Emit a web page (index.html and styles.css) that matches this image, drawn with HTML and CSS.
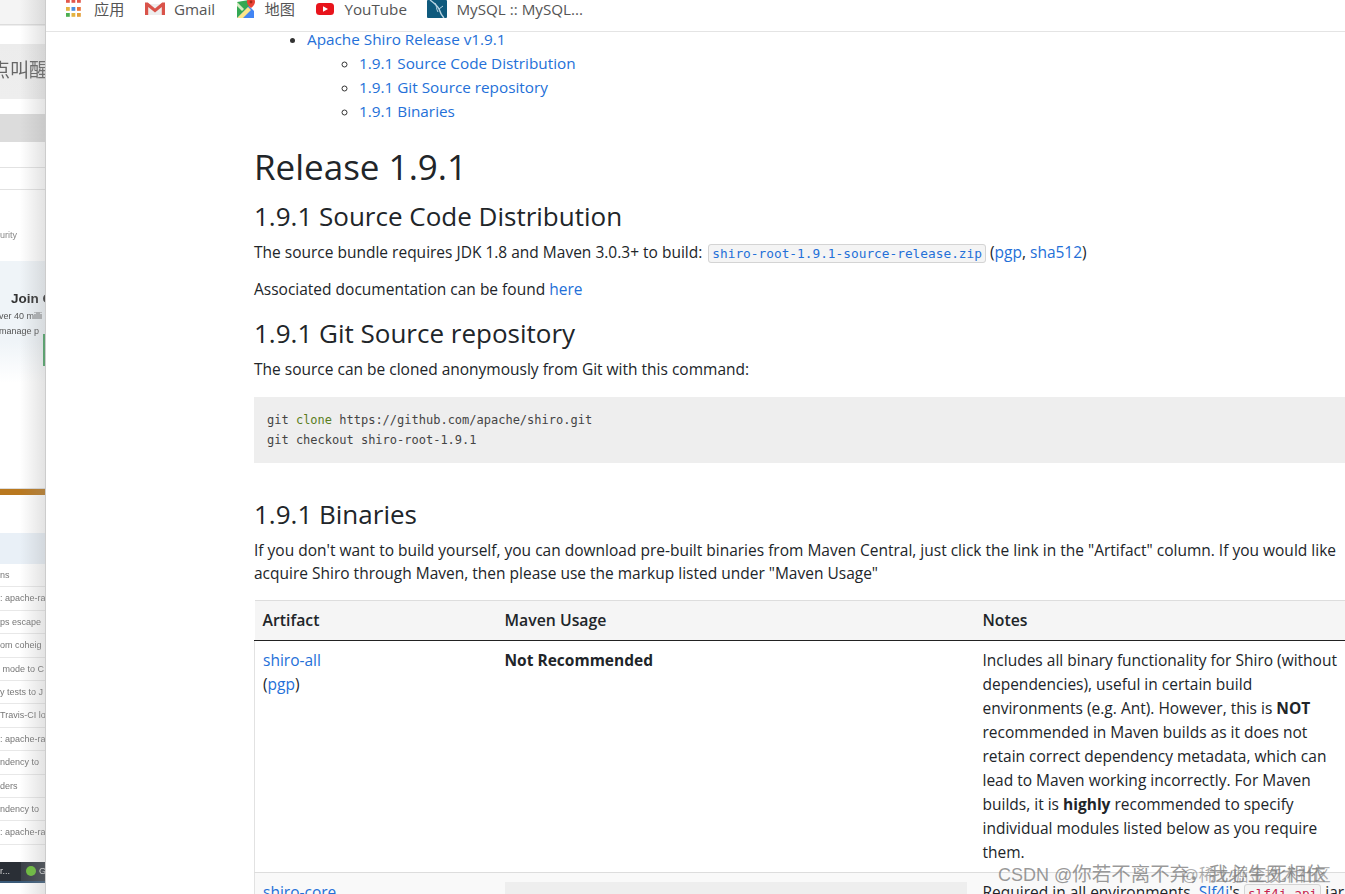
FILE: index.html
```html
<!DOCTYPE html>
<html lang="zh">
<head>
<meta charset="utf-8">
<title>Apache Shiro Release</title>
<link rel="stylesheet" href="styles.css">
</head>
<body>
<div class="desktop">
  <aside class="back-window">
    <div class="bw-top"><span class="bw-title">点叫醒</span></div>
    <div class="bw-gap1"></div>
    <div class="bw-band"></div>
    <div class="bw-tabs"><span class="bw-rule"></span><span class="bw-rule bw-rule2"></span><span class="bw-sec">urity</span></div>
    <div class="bw-join">
      <b>Join G</b>
      <span>ver 40 milli</span>
      <span>manage p</span>
      <i class="bw-btn"></i>
    </div>
    <div class="bw-orange"></div>
    <div class="bw-head"></div>
    <ul class="bw-list">
      <li>ns</li><li>: apache-ra</li><li>ps escape</li><li>om coheig</li><li>&nbsp;mode to C</li><li>y tests to J</li><li>Travis-CI lo</li><li>: apache-ra</li><li>ndency to</li><li>ders</li><li>ndency to</li><li>: apache-ra</li>
    </ul>
    <div class="bw-task"><span class="bw-task-a">r...</span><span class="bw-task-b"><i></i>G</span></div>
  </aside>
  <main class="front-window">
    <nav class="bookmarks">
      <a class="bm">
        <svg class="ic" viewBox="0 0 20 18"><rect x="1" y="-1" width="3.800" height="3.800" fill="#e2574c"/><rect x="6.500" y="-1" width="3.800" height="3.800" fill="#e2574c"/><rect x="12" y="-1" width="3.800" height="3.800" fill="#e2574c"/><rect x="1" y="7" width="3.800" height="3.800" fill="#e3b341"/><rect x="6.500" y="7" width="3.800" height="3.800" fill="#4a8fe0"/><rect x="12" y="7" width="3.800" height="3.800" fill="#e8743b"/><rect x="1" y="13" width="3.800" height="3.800" fill="#4caf50"/><rect x="6.500" y="13" width="3.800" height="3.800" fill="#e3b341"/><rect x="12" y="13" width="3.800" height="3.800" fill="#e3a03b"/></svg>
        应用</a>
      <a class="bm">
        <svg class="ic" viewBox="0 0 20 18"><path d="M3 4h14v11H3z" fill="#eee"/><path d="M0 2.500h2.800L10 8.500l7.200-6H20V15h-3.200V7L10 12.500 3.200 7V15H0z" fill="#d9534a"/></svg>
        Gmail</a>
      <a class="bm">
        <svg class="ic" viewBox="0 0 20 18"><path d="M1 2L13 0v18H1z" fill="#34a853"/><path d="M1 18L13 6l5 5v7z" fill="#4285f4"/><path d="M1 18L12 7l3 3L7 18z" fill="#fbe68a"/><path d="M1 2l7 7-2 2-5-5z" fill="#d5ecc2"/><path d="M15 -2a4 4 0 0 1 4 4c0 3-4 6-4 6s-4-3-4-6a4 4 0 0 1 4-4z" fill="#ea4335"/><circle cx="15" cy="2" r="1.400" fill="#a52714"/></svg>
        地图</a>
      <a class="bm">
        <svg class="ic" viewBox="0 0 20 18"><rect x="1" y="3" width="18" height="12" rx="3.500" fill="#e8141c"/><path d="M8 6.300l5 2.700-5 2.700z" fill="#fff"/></svg>
        YouTube</a>
      <a class="bm">
        <svg class="ic" viewBox="0 0 20 18"><rect x="0" width="20" height="18" rx="1" fill="#0f5a7d"/><path d="M3 0c4 3 7 5 9 9 1 3 2 6 5 9" fill="none" stroke="#b9d5e3" stroke-width="1.400"/><path d="M8 3c2 3 1 6 3 9M12 9l4-3" fill="none" stroke="#b9d5e3" stroke-width="1"/></svg>
        MySQL :: MySQL...</a>
    </nav>
    <article class="doc">
      <ul class="toc">
        <li><a>Apache Shiro Release v1.9.1</a>
          <ul>
            <li><a>1.9.1 Source Code Distribution</a></li>
            <li><a>1.9.1 Git Source repository</a></li>
            <li><a>1.9.1 Binaries</a></li>
          </ul>
        </li>
      </ul>
      <h1>Release 1.9.1</h1>
      <h2 class="h-source">1.9.1 Source Code Distribution</h2>
      <p>The source bundle requires JDK 1.8 and Maven 3.0.3+ to build: <a><code class="chip">shiro-root-1.9.1-source-release.zip</code></a> (<a>pgp</a>, <a>sha512</a>)</p>
      <p>Associated documentation can be found <a>here</a></p>
      <h2 class="h-git">1.9.1 Git Source repository</h2>
      <p>The source can be cloned anonymously from Git with this command:</p>
      <pre class="block">git <span class="kw">clone</span> https://github.com/apache/shiro.git
git checkout shiro-root-1.9.1</pre>
      <h2 class="h-bin">1.9.1 Binaries</h2>
      <p class="wide">If you don't want to build yourself, you can download pre-built binaries from Maven Central, just click the link in the "Artifact" column. If you would like<br>acquire Shiro through Maven, then please use the markup listed under "Maven Usage"</p>
      <table class="artifacts">
        <thead>
          <tr><th class="c1">Artifact</th><th class="c2">Maven Usage</th><th class="c3">Notes</th></tr>
        </thead>
        <tbody>
          <tr>
            <td><a>shiro-all</a><br>(<a>pgp</a>)</td>
            <td><b>Not Recommended</b></td>
            <td>Includes all binary functionality for Shiro (without<br>dependencies), useful in certain build<br>environments (e.g. Ant). However, this is <b>NOT</b><br>recommended in Maven builds as it does not<br>retain correct dependency metadata, which can<br>lead to Maven working incorrectly. For Maven<br>builds, it is <b>highly</b> recommended to specify<br>individual modules listed below as you require<br>them.</td>
          </tr>
          <tr class="alt">
            <td><a>shiro-core</a></td>
            <td><div class="mini"></div></td>
            <td>Required in all environments. <a>Slf4j</a>'s <code class="red">slf4j-api</code> jar</td>
          </tr>
        </tbody>
      </table>
    </article>
    <div class="mark"><span class="mark-ghost">@稀土掘金技术社区</span><span class="mark-latin">CSDN @</span><span class="mark-cjk">你若不离不弃，我必生死相依</span></div>
  </main>
</div>
</body>
</html>
```
FILE: styles.css
```css
* { box-sizing: border-box; }
html, body { margin: 0; height: 100%; overflow: hidden; background: #fff; }
.desktop { display: flex; width: 1345px; height: 894px; overflow: hidden; font-family: "Open Sans", "Noto Sans CJK SC", sans-serif; }

/* blurred window behind */
.back-window { flex: 0 0 46px; height: 894px; overflow: hidden; display: flex; flex-direction: column; background: #fff; color: #666; font-family: "Liberation Sans", "Noto Sans CJK SC", sans-serif; white-space: nowrap; position: relative; filter: blur(.45px); }
.back-window::after { content: ""; position: absolute; top: 0; right: 0; bottom: 0; width: 26px; background: linear-gradient(to right, rgba(150,150,150,0), rgba(150,150,150,.28)); }
.bw-top { height: 99px; padding-top: 58px; line-height: 26px; background: linear-gradient(#f4f4f4 0 24px, #ddd 24px, #ddd 25px, #fff 26px, #fff 44px, #ececec 44px, #eee 99px); }
.bw-title { font-size: 19px; margin-left: -9px; color: #666; display: block; }
.bw-gap1 { height: 15px; background: #fff; }
.bw-band { height: 28px; background: #dcdcdc; }
.bw-tabs { height: 120px; position: relative; background: #fff; }
.bw-rule { position: absolute; left: 0; right: 0; top: 25px; height: 1px; background: #e2e2e2; }
.bw-rule2 { top: 47px; }
.bw-sec { position: absolute; left: 0; top: 88px; font-size: 9px; color: #888; }
.bw-join { height: 122px; background: linear-gradient(#eff4f8 80px, #fff 122px); display: flex; flex-direction: column; align-items: flex-end; font-size: 9px; line-height: 15px; padding-top: 28px; position: relative; overflow: hidden; color: #555; margin-top: -1px; }
.bw-join b { font-size: 13.500px; color: #333; line-height: 20px; margin-right: -4px; align-self: flex-start; margin-left: 11px; }
.bw-join span { align-self: flex-start; margin-left: -1px; }
.bw-btn { position: absolute; right: 0; top: 73px; width: 3px; height: 32px; background: #4aa564; }
.bw-orange { height: 6px; margin-top: 106px; background: #b9781f; box-shadow: 0 -1px 0 #ddd; }
.bw-head { height: 31px; margin-top: 38px; background: #e9f0f7; }
.bw-list { list-style: none; margin: 0; padding: 0; font-size: 9px; color: #777; }
.bw-list li { height: 23.400px; line-height: 23px; border-bottom: 1px solid #e8e8e8; overflow: hidden; }
.bw-task { margin-top: 17px; height: 21px; background: #2a2f36; color: #ddd; font-size: 9px; display: flex; align-items: center; border-bottom: 2px solid #3a5a78; }
.bw-task-a { width: 22px; }
.bw-task-b { flex: 1; display: flex; align-items: center; gap: 3px; background: #3a4048; height: 100%; padding-left: 5px; }
.bw-task-b i { width: 10px; height: 10px; border-radius: 50%; background: #6cbf3c; flex: none; }

/* main window */
.front-window { flex: 1 1 auto; min-width: 0; height: 894px; overflow: hidden; position: relative; background: #fff; box-shadow: -1px 0 0 #ccc; color: #212529; }
.bookmarks { height: 32px; display: flex; align-items: flex-start; background: #fff; border-bottom: 1px solid #e4e4e4; padding-left: 19px; position: relative; z-index: 1; overflow: hidden; }
.bm { display: flex; align-items: flex-start; font-size: 15.200px; line-height: 19px; color: #555; white-space: nowrap; height: 31px; padding-right: 20.500px; }
.ic { width: 20px; height: 18px; margin-right: 9px; flex: none; overflow: hidden; }

.doc { margin-top: -5px; padding-left: 208px; width: 1500px; font-size: 15.500px; line-height: 24px; color: #212529; }
.doc a { color: #2470d8; }
.toc, .toc ul { margin: 0; }
.toc { padding-left: 53px; font-size: 15.300px; }
.toc ul { padding-left: 52px; list-style: circle; }
.toc li::marker { color: #333; }
.doc h1 { font-size: 35px; font-weight: 400; line-height: 44px; margin: 22px 0 0; }
.doc h2 { font-size: 26px; font-weight: 400; line-height: 32px; margin: 0 0 8px; }
.doc .h-source { margin-top: 11px; }
.doc .h-git { margin-top: 16px; }
.doc .h-bin { margin-top: 35px; margin-bottom: 9px; }
.doc p { margin: 0 0 13px; white-space: nowrap; }
.doc code, .doc pre { font-family: "DejaVu Sans Mono", "Liberation Mono", monospace; }
.chip { font-size: 12.800px; line-height: 1; color: #2470d8; background: #f4f4f4; border: 1px solid #d4d4d4; border-radius: 3px; padding: 1px 3px; margin-left: 2px; }
.block { margin: 16px 0 0; height: 66px; padding: 13px; font-size: 12px; line-height: 20px; background: #eee; color: #444; }
.kw { color: #5a7d1c; }
.doc p.wide { line-height: 23px; margin-bottom: 15px; }
.artifacts { border-collapse: collapse; table-layout: fixed; width: 1300px; white-space: nowrap; }
.artifacts th { text-align: left; font-weight: 600; font-size: 15.800px; padding: 7px 8px 8px; line-height: 24px; background: #f5f5f5; border-top: 1px solid #ddd; border-bottom: 1px solid #222; }
.artifacts td { padding: 7px 8px 8px; vertical-align: top; border: 1px solid #e2e2e2; border-top-color: #ddd; border-right: 0; border-bottom-color: #ddd; }
.artifacts th + th, .artifacts td + td { border-left: 0; }
.artifacts b { font-weight: 700; }
.c1 { width: 242px; }
.c2 { width: 478px; }
.alt td { background: #f9f9f9; }
.mini { height: 100px; background: #eee; margin-top: 2px; }
.red { font-size: 12.800px; line-height: 1; color: #c7254e; background: #f4f4f4; border: 1px solid #d4d4d4; border-radius: 3px; padding: 1px 3px; }

/* watermark */
.mark { position: absolute; left: 952px; top: 862px; font-family: "Liberation Sans", "Noto Sans CJK SC", sans-serif; font-size: 18px; line-height: 24px; color: rgba(120,120,120,.75); white-space: nowrap; z-index: 2; }
.mark-cjk { font-size: 19.500px; }
.mark-ghost { position: absolute; left: 184px; top: 1px; font-size: 16.500px; color: rgba(120,120,120,.6); }
```
